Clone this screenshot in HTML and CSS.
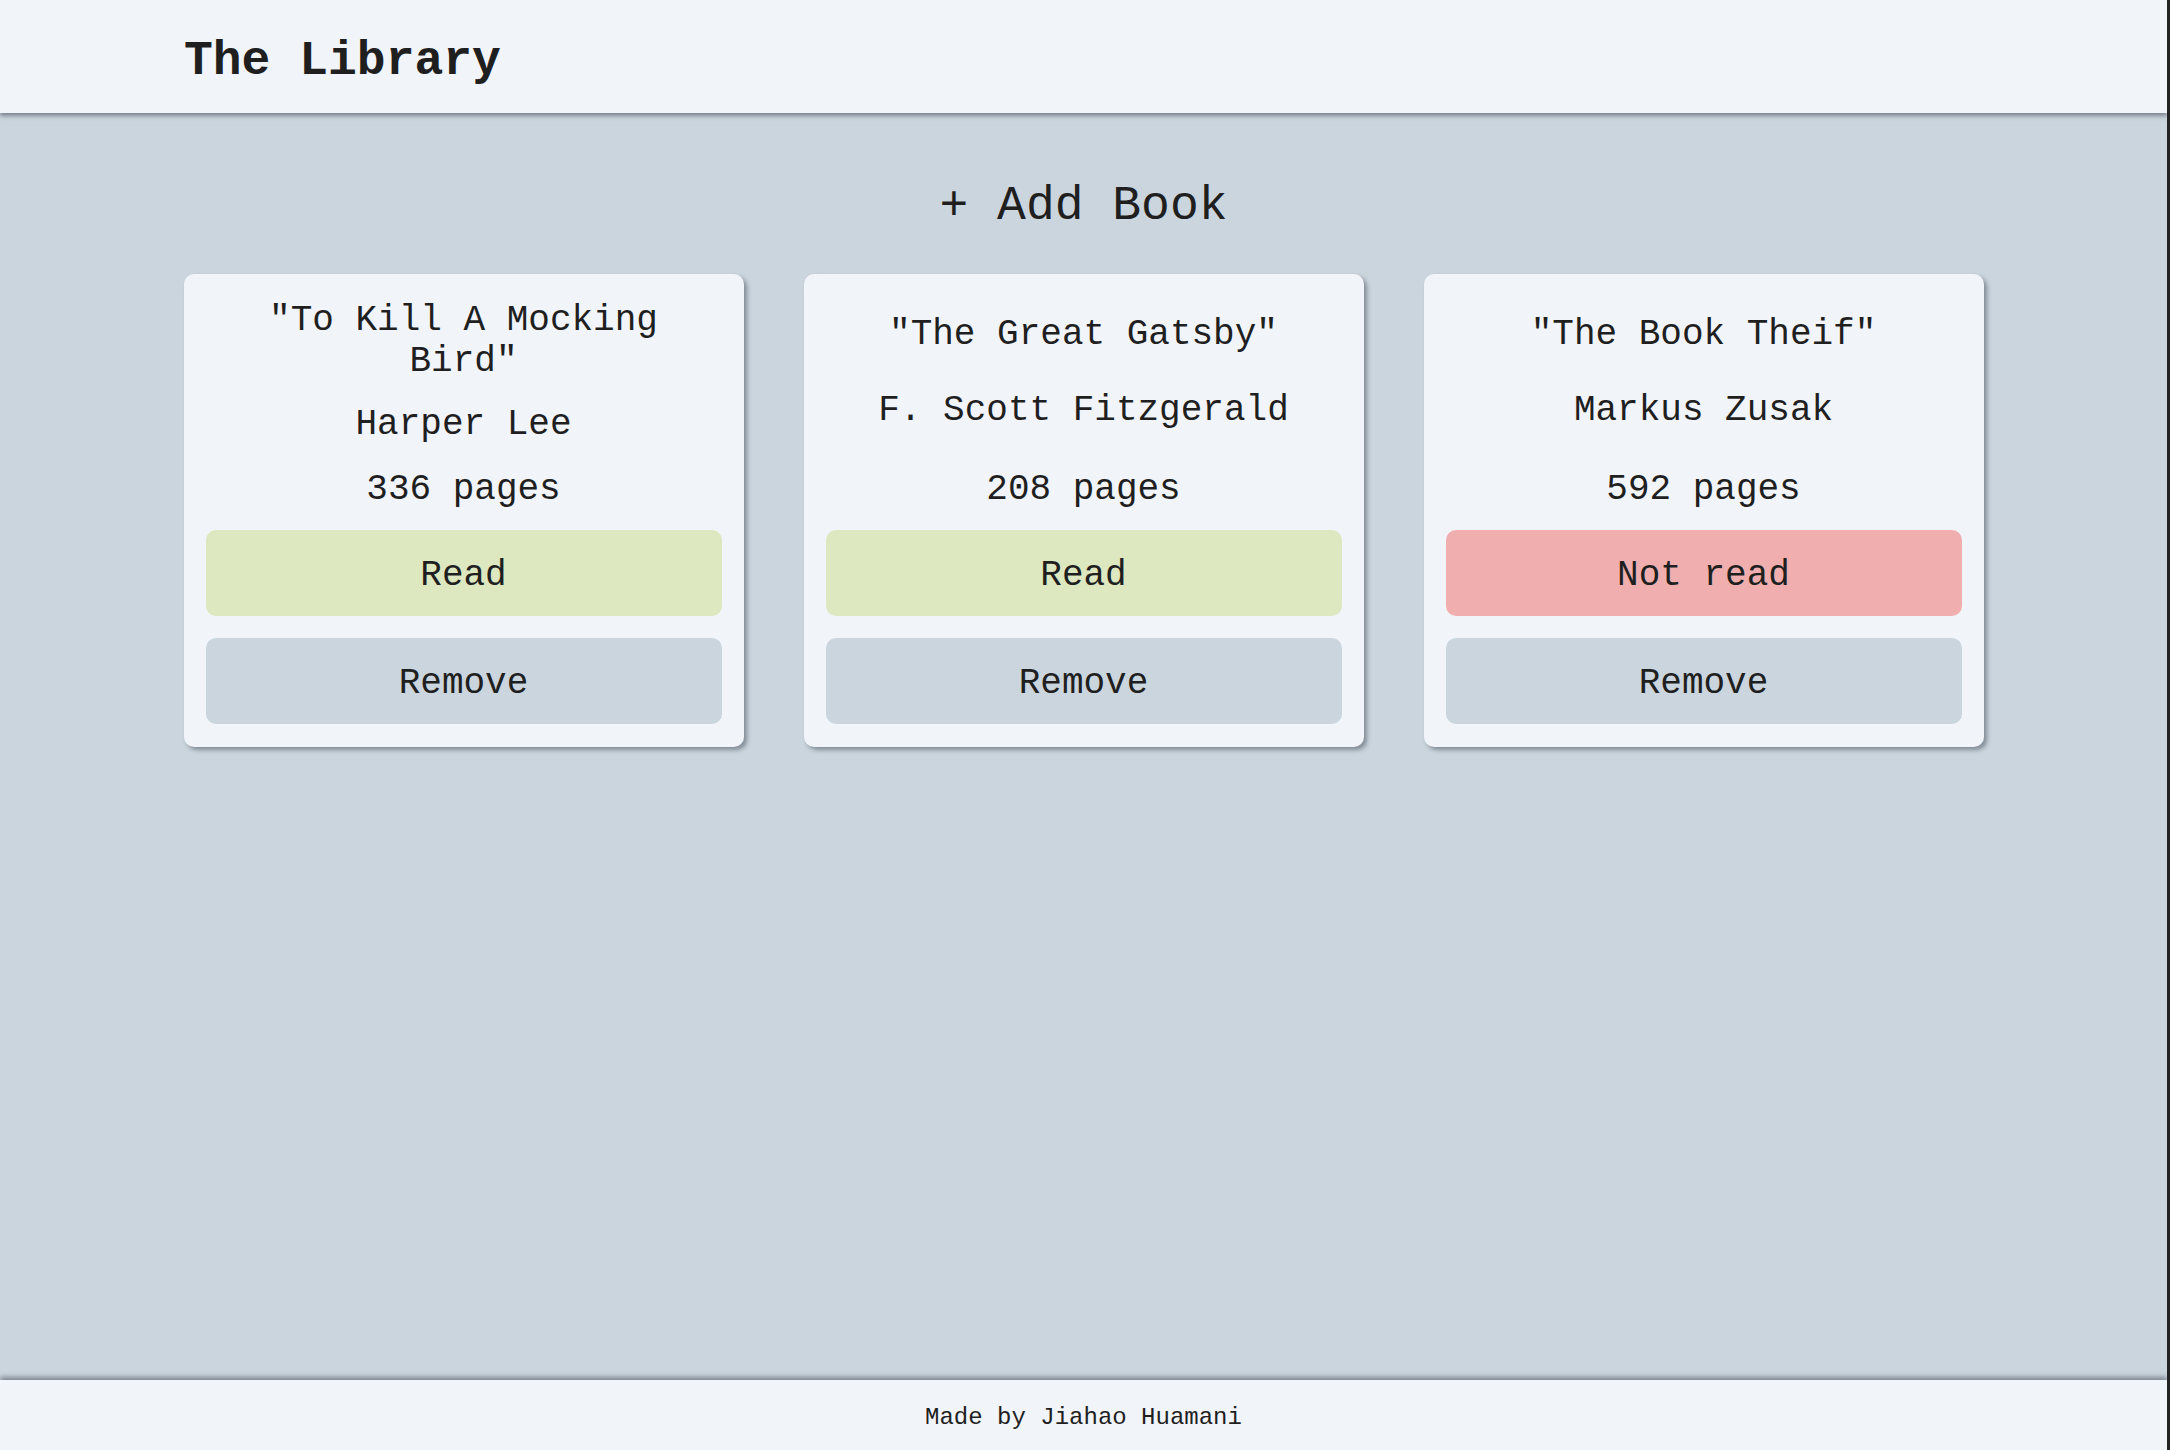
FILE: index.html
```html
<!DOCTYPE html>
<html lang="en">
<head>
<meta charset="utf-8">
<title>The Library</title>
<link rel="stylesheet" href="styles.css">
</head>
<body>
  <header class="site-header">
    <h1 class="site-title">The Library</h1>
  </header>
  <main class="main">
    <button class="add-btn">+ Add Book</button>
    <section class="books">
      <article class="card">
        <p class="card-text">"To Kill A Mocking Bird"</p>
        <p class="card-text">Harper Lee</p>
        <p class="card-text">336 pages</p>
        <button class="btn btn-read">Read</button>
        <button class="btn btn-remove">Remove</button>
      </article>
      <article class="card">
        <p class="card-text">"The Great Gatsby"</p>
        <p class="card-text">F. Scott Fitzgerald</p>
        <p class="card-text">208 pages</p>
        <button class="btn btn-read">Read</button>
        <button class="btn btn-remove">Remove</button>
      </article>
      <article class="card">
        <p class="card-text">"The Book Theif"</p>
        <p class="card-text">Markus Zusak</p>
        <p class="card-text">592 pages</p>
        <button class="btn btn-notread">Not read</button>
        <button class="btn btn-remove">Remove</button>
      </article>
    </section>
  </main>
  <footer class="site-footer">Made by Jiahao Huamani</footer>
</body>
</html>
```
FILE: styles.css
```css
* { box-sizing: border-box; }

html {
  background: #232323;
}

body {
  margin: 0;
  margin-right: 3px;
  min-height: 100vh;
  display: flex;
  flex-direction: column;
  background: #cbd5de;
  color: #1f1f1f;
  font-family: "Liberation Mono", "Courier New", monospace;
}

.site-header {
  height: 113px;
  background: #f1f4f9;
  display: flex;
  align-items: center;
  padding: 0 0 0 184px;
  box-shadow: 0 3px 4px rgba(60, 70, 82, 0.55);
  position: relative;
  z-index: 2;
}

.site-title {
  margin: 0;
  margin-top: 8px;
  font-size: 48px;
  font-weight: 700;
  line-height: normal;
}

.main {
  flex: 1;
  display: flex;
  flex-direction: column;
  align-items: center;
  padding-top: 66px;
}

.add-btn {
  background: none;
  border: none;
  padding: 0;
  margin: 0 0 41px;
  font-family: inherit;
  font-size: 48px;
  color: #1f1f1f;
  line-height: normal;
  cursor: pointer;
}

.books {
  display: grid;
  grid-template-columns: repeat(3, 560px);
  column-gap: 60px;
  justify-content: center;
}

.card {
  background: #f1f4f9;
  border-radius: 10px;
  padding: 26px 22px 23px;
  display: flex;
  flex-direction: column;
  gap: 22px;
  box-shadow: 3px 3px 4px rgba(60, 70, 82, 0.5);
}

.card-text {
  margin: 0;
  flex: 1 0 auto;
  display: grid;
  align-content: end;
  text-align: center;
  font-size: 36px;
  line-height: normal;
}

.card-text + .card-text + .card-text {
  padding-top: 2px;
  margin-bottom: -2px;
}

.btn {
  height: 86px;
  border: none;
  border-radius: 10px;
  padding: 5px 0 0;
  font-family: inherit;
  font-size: 36px;
  color: #1f1f1f;
  cursor: pointer;
  flex: none;
}

.btn-read { background: #dde7c0; }
.btn-notread { background: #f0afae; }
.btn-remove { background: #cbd5de; }

.site-footer {
  height: 70px;
  padding-top: 5px;
  background: #f1f4f9;
  display: flex;
  align-items: center;
  justify-content: center;
  font-size: 24px;
  box-shadow: 0 -3px 5px rgba(60, 70, 82, 0.55);
  position: relative;
  z-index: 2;
}
```
